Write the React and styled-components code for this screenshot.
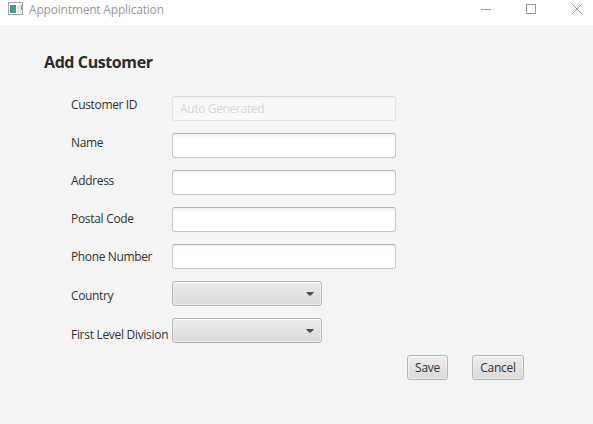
import React from "react";
import styled, { createGlobalStyle } from "styled-components";

const GlobalStyle = createGlobalStyle`
  * { box-sizing: border-box; }
  html, body { margin: 0; background: #f4f4f4; overflow: hidden; }
  body { font-family: "Open Sans", "Noto Sans", sans-serif; font-size: 12px; color: #333; }
`;

const Window = styled.div`
  width: 593px;
  height: 424px;
  background: #f4f4f4;
  overflow: hidden;
`;

const TitleBar = styled.header`
  display: flex;
  align-items: flex-start;
  height: 25px;
  padding-left: 8px;
  background: #fff;
`;

const AppIcon = styled.svg`
  display: block;
  margin-top: 2px;
`;

const Caption = styled.span`
  flex: 1;
  margin-left: 6px;
  line-height: 20px;
  letter-spacing: -0.2px;
  color: #999;
  white-space: nowrap;
`;

const WindowControls = styled.svg`
  display: block;
`;

const Content = styled.main`
  display: flex;
  flex-direction: column;
`;

const Heading = styled.h1`
  margin: 27px 0 0 44px;
  height: 44px;
  font-size: 16px;
  line-height: 20px;
  font-weight: 700;
  letter-spacing: -0.4px;
  color: #2b2b2b;
`;

const Form = styled.div`
  display: flex;
  padding-left: 71px;
`;

const Labels = styled.div`
  display: flex;
  flex-direction: column;
  width: 101px;
`;

const Label = styled.label`
  height: ${(p) => p.$pitch || 38}px;
  line-height: 18px;
  letter-spacing: ${(p) => p.$tracking}px;
  white-space: nowrap;
`;

const Fields = styled.div`
  display: flex;
  flex-direction: column;
  gap: 12px;
`;

const TextField = styled.input`
  width: 224px;
  height: 25px;
  margin: 0;
  padding: 0 7px;
  border: 1px solid #c8c8c8;
  border-top-color: #b5b5b5;
  border-radius: 3px;
  background: linear-gradient(#f1f1f1, #fff 4px);
  font: inherit;
  letter-spacing: -0.35px;
  outline: none;
  &::placeholder { color: #aaa; opacity: 1; }
  &:disabled { opacity: 0.4; }
`;

const ComboBox = styled.button`
  display: flex;
  align-items: center;
  justify-content: flex-end;
  width: 150px;
  height: 25px;
  padding: 0 7px;
  border: 1px solid #b5b5b5;
  border-radius: 3px;
  background: linear-gradient(#ececec, #dadada);
  box-shadow: inset 0 0 0 1px rgba(255, 255, 255, 0.45), inset 0 1px 0 #fafafa;
`;

const Actions = styled.div`
  display: flex;
  gap: 24px;
  padding: 12px 0 0 407px;
`;

const Button = styled.button`
  width: ${(p) => p.$width}px;
  height: 25px;
  margin: 0;
  padding: 0;
  border: 1px solid #b5b5b5;
  border-radius: 3px;
  background: linear-gradient(#ececec, #dadada);
  box-shadow: inset 0 0 0 1px rgba(255, 255, 255, 0.45), inset 0 1px 0 #fafafa;
  font: inherit;
  line-height: 23px;
  letter-spacing: -0.3px;
  color: #333;
`;

const Arrow = () => (
  <svg width="8" height="4" viewBox="0 0 8 4">
    <path d="M0 0H8L5 3.5H3Z" fill="#505050" />
  </svg>
);

const LABELS = [
  { text: "Customer ID", tracking: -0.35 },
  { text: "Name", tracking: -0.35 },
  { text: "Address", tracking: -0.35 },
  { text: "Postal Code", tracking: -0.3 },
  { text: "Phone Number", pitch: 39, tracking: -0.37 },
  { text: "Country", pitch: 39, tracking: -0.35 },
  { text: "First Level Division", pitch: 17, tracking: -0.3 },
];

export default function App() {
  return (
    <Window>
      <GlobalStyle />
      <TitleBar>
        <AppIcon width="15" height="13" viewBox="0 0 15 13">
          <defs>
            <linearGradient id="screen" x1="0" y1="0" x2="1" y2="1">
              <stop offset="0" stopColor="#4c86a0" />
              <stop offset="1" stopColor="#4fae7c" />
            </linearGradient>
          </defs>
          <rect x="0.5" y="0.5" width="14" height="12" fill="#fff" stroke="#a3a5aa" />
          <rect x="2" y="3" width="6" height="8" fill="url(#screen)" />
          <rect x="9" y="3" width="4" height="8" fill="#e6e9e8" />
          <rect x="13" y="3" width="1" height="5" fill="#76a392" />
        </AppIcon>
        <Caption>Appointment Application</Caption>
        <WindowControls width="115" height="20" viewBox="478 0 115 20" fill="none" stroke="#999">
          <path d="M481 9.5H491" />
          <rect x="526.5" y="4.5" width="9" height="9" />
          <path d="M572 4L582 14M582 4L572 14" />
        </WindowControls>
      </TitleBar>
      <Content>
        <Heading>Add Customer</Heading>
        <Form>
          <Labels>
            {LABELS.map((l) => (
              <Label key={l.text} $pitch={l.pitch} $tracking={l.tracking}>{l.text}</Label>
            ))}
          </Labels>
          <Fields>
            <TextField disabled placeholder="Auto Generated" />
            <TextField />
            <TextField />
            <TextField />
            <TextField />
            <ComboBox><Arrow /></ComboBox>
            <ComboBox><Arrow /></ComboBox>
          </Fields>
        </Form>
        <Actions>
          <Button $width={41}>Save</Button>
          <Button $width={52}>Cancel</Button>
        </Actions>
      </Content>
    </Window>
  );
}
